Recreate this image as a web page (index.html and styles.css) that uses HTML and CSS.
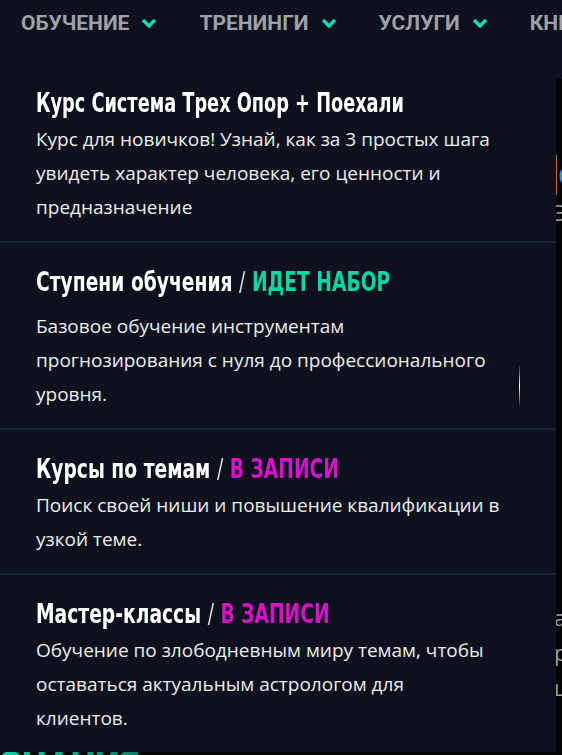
FILE: index.html
```html
<!DOCTYPE html>
<html lang="ru">
<head>
<meta charset="utf-8">
<title>Меню обучения</title>
<link rel="stylesheet" href="styles.css">
</head>
<body>
<header class="topnav">
  <nav class="nav-list">
    <a class="nav-item" href="#">ОБУЧЕНИЕ<svg class="chev" viewBox="0 0 16 10" width="16" height="10"><polyline points="2,2 8,8 14,2"/></svg></a>
    <a class="nav-item" href="#">ТРЕНИНГИ<svg class="chev" viewBox="0 0 16 10" width="16" height="10"><polyline points="2,2 8,8 14,2"/></svg></a>
    <a class="nav-item" href="#">УСЛУГИ<svg class="chev" viewBox="0 0 16 10" width="16" height="10"><polyline points="2,2 8,8 14,2"/></svg></a>
    <a class="nav-item" href="#">КНИГИ<svg class="chev" viewBox="0 0 16 10" width="16" height="10"><polyline points="2,2 8,8 14,2"/></svg></a>
  </nav>
</header>

<main class="hero">
  <div class="hero-side">
    <div class="hero-line hero-blue">Сила</div>
    <div class="hero-line hero-grey">Эта</div>
    <div class="hero-spacer"></div>
    <div class="hero-line hero-small">а</div>
    <div class="hero-line hero-small">р</div>
    <div class="hero-line hero-small">ш</div>
  </div>
  <div class="hero-bottom">
    <span class="hero-big">ЗНАНИЯ</span>
    <span class="hero-note">знаний</span>
  </div>
</main>

<div class="dropdown">
  <div class="dd-item dd-first">
    <div class="dd-title dd-title-tight">Курс Система Трех Опор + Поехали</div>
    <p class="dd-desc">Курс для новичков! Узнай, как за 3 простых шага<br>увидеть характер человека, его ценности и<br>предназначение</p>
  </div>
  <div class="dd-item dd-spaced">
    <div class="dd-title">Ступени обучения <span class="slash">/</span> <span class="tag-teal">ИДЕТ НАБОР</span></div>
    <p class="dd-desc">Базовое обучение инструментам<br>прогнозирования с нуля до профессионального<br>уровня.</p>
    <span class="dd-caret"></span>
  </div>
  <div class="dd-item">
    <div class="dd-title">Курсы по темам <span class="slash">/</span> <span class="tag-pink">В ЗАПИСИ</span></div>
    <p class="dd-desc">Поиск своей ниши и повышение квалификации в<br>узкой теме.</p>
  </div>
  <div class="dd-item dd-last">
    <div class="dd-title">Мастер-классы <span class="slash">/</span> <span class="tag-pink">В ЗАПИСИ</span></div>
    <p class="dd-desc">Обучение по злободневным миру темам, чтобы<br>оставаться актуальным астрологом для<br>клиентов.</p>
  </div>
</div>
</body>
</html>
```

FILE: styles.css
```css
html, body {
  margin: 0;
  padding: 0;
}
body {
  width: 562px;
  height: 755px;
  overflow: hidden;
  background: #0c111d;
  position: relative;
}

/* top navigation */
.topnav {
  height: 79px;
  background: #0c111d;
  overflow: hidden;
}
.nav-list {
  display: flex;
  align-items: center;
  gap: 42px;
  padding: 11px 0 0 21px;
  white-space: nowrap;
}
.nav-item {
  display: flex;
  align-items: center;
  gap: 12px;
  font-family: Roboto, "Liberation Sans", sans-serif;
  font-weight: 700;
  font-size: 21px;
  line-height: 24px;
  color: #a0a1a8;
  text-decoration: none;
}
.chev {
  display: block;
  fill: none;
  stroke: #13dbb3;
  stroke-width: 3.4;
  stroke-linecap: butt;
  stroke-linejoin: miter;
}

/* background content (mostly hidden behind the dropdown) */
.hero {
  height: 676px;
  background: #030405;
  overflow: hidden;
  display: flex;
  flex-direction: column;
}
.hero-side {
  flex: 1;
  padding: 76px 0 0 556px;
  font-family: "Open Sans", sans-serif;
  white-space: nowrap;
  overflow: hidden;
}
.hero-line {
  line-height: 35px;
}
.hero-blue {
  font-size: 26px;
  line-height: 40px;
  color: #4c8fd0;
  border-left: 1px solid #b87434;
  padding-left: 1px;
}
.hero-grey {
  font-size: 22px;
  color: #9a9a9a;
  margin-left: -2px;
}
.hero-spacer {
  height: 370px;
}
.hero-small {
  font-size: 22px;
  color: #9fa0a2;
  margin-left: -2px;
}
.hero-bottom {
  display: flex;
  justify-content: space-between;
  align-items: flex-start;
  height: 3px;
  flex: none;
  overflow: hidden;
  white-space: nowrap;
}
.hero-big {
  font-family: Roboto, sans-serif;
  font-weight: 900;
  font-size: 35px;
  line-height: 35px;
  margin-top: -5px;
  color: #0b9f80;
  background: linear-gradient(90deg, #0fd3a8, #0b7d64);
  -webkit-background-clip: text;
  background-clip: text;
  -webkit-text-fill-color: transparent;
}
.hero-note {
  font-family: "Open Sans", sans-serif;
  font-size: 22px;
  line-height: 30px;
  margin-top: -8px;
  color: #8d8e90;
  margin-right: -20px;
}

/* dropdown panel */
.dropdown {
  position: absolute;
  top: 79px;
  left: 0;
  bottom: 3px;
  width: 556px;
  background: #0c111d;
  overflow: hidden;
}
.dd-item {
  position: relative;
  padding: 25px 20px 17px 36px;
  border-bottom: 2px solid #1a2237;
}
.dd-first {
  padding-top: 10px;
}
.dd-last {
  border-bottom: none;
}
.dd-title {
  font-family: "DejaVu Sans Condensed", "DejaVu Sans", sans-serif;
  font-stretch: condensed;
  font-weight: 700;
  font-size: 27px;
  line-height: 28px;
  color: #ffffff;
  white-space: nowrap;
  transform: scaleX(0.77);
  transform-origin: left center;
}
.dd-title-tight {
  transform: scaleX(0.73);
}
.slash {
  font-weight: 400;
  color: #dcdde0;
}
.tag-teal {
  color: #00d9a6;
}
.tag-pink {
  color: #d812c8;
}
.dd-desc {
  margin: 5px 0 0;
  font-family: "Open Sans", sans-serif;
  font-size: 19px;
  line-height: 34px;
  color: #eceef0;
}
.dd-spaced .dd-desc {
  margin-top: 13px;
}
.dd-caret {
  position: absolute;
  left: 519px;
  top: 123px;
  width: 1px;
  height: 40px;
  background: linear-gradient(180deg, rgba(255,255,255,0.1), #ffffff 50%, rgba(255,255,255,0.1));
}
```
